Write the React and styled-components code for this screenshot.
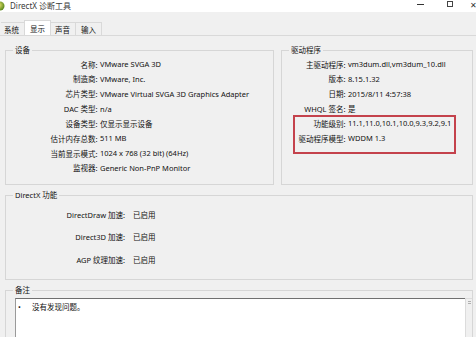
import React from 'react'
import styled, { createGlobalStyle } from 'styled-components';

const GlobalStyle = createGlobalStyle`
  * { box-sizing: border-box; }
  html, body {
    margin: 0;
    padding: 0;
    background: #f0f0f0;
  }
  body {
    font-family: "Noto Sans", "Noto Sans CJK SC", sans-serif;
    font-size: 7.5px;
    color: #111;
  }
`;

const deviceRows = [
  ['名称', 'VMware SVGA 3D'],
  ['制造商', 'VMware, Inc.'],
  ['芯片类型', 'VMware Virtual SVGA 3D Graphics Adapter'],
  ['DAC 类型', 'n/a'],
  ['设备类型', '仅显示显示设备'],
  ['估计内存总数', '511 MB'],
  ['当前显示模式', '1024 x 768 (32 bit) (64Hz)'],
  ['监视器', 'Generic Non-PnP Monitor'],
];

const driverRows = [
  ['主驱动程序', 'vm3dum.dll,vm3dum_10.dll'],
  ['版本', '8.15.1.32'],
  ['日期', '2015/8/11 4:57:38'],
  ['WHQL 签名', '是'],
];

const driverMarked = [
  ['功能级别', '11.1,11.0,10.1,10.0,9.3,9.2,9.1'],
  ['驱动程序模型', 'WDDM 1.3'],
];

const featureRows = [
  ['DirectDraw 加速', '已启用'],
  ['Direct3D 加速', '已启用'],
  ['AGP 纹理加速', '已启用'],
];

const tabs = ['系统', '显示', '声音', '输入'];

const App = () => {
  return (
    <Window>
      <GlobalStyle />
      <TitleBar>
        <svg width="10" height="10" viewBox="0 0 10 10" style={{ marginLeft: -5 }}>
          <defs>
            <radialGradient id="dx" cx="0.4" cy="0.4" r="0.6">
              <stop offset="0" stopColor="#e8e46a" />
              <stop offset="1" stopColor="#5e8a1e" />
            </radialGradient>
          </defs>
          <circle cx="5" cy="5" r="4.5" fill="url(#dx)" />
        </svg>
        <Title>DirectX 诊断工具</Title>
        <Controls>
          <Minimize />
          <Maximize />
          <Close>✕</Close>
        </Controls>
      </TitleBar>

      <TabStrip>
        {tabs.map((t) => (
          <Tab key={t} active={t === '显示'}>{t}</Tab>
        ))}
      </TabStrip>

      <Panel>
        <TopRow>
          <Group>
            <Legend>设备</Legend>
            <Rows labelWidth={91.5} valueGap={2.5}>
              {deviceRows.map(([k, v]) => (
                <React.Fragment key={k}>
                  <Label>{k}:</Label>
                  <Value>{v}</Value>
                </React.Fragment>
              ))}
            </Rows>
          </Group>

          <Group>
            <Legend>驱动程序</Legend>
            <Rows labelWidth={63.5} valueGap={2.5}>
              {driverRows.map(([k, v]) => (
                <React.Fragment key={k}>
                  <Label>{k}:</Label>
                  <Value>{v}</Value>
                </React.Fragment>
              ))}
              <Marked>
                {driverMarked.map(([k, v]) => (
                  <React.Fragment key={k}>
                    <Label>{k}:</Label>
                    <Value>{v}</Value>
                  </React.Fragment>
                ))}
              </Marked>
            </Rows>
          </Group>
        </TopRow>

        <Group>
          <Legend>DirectX 功能</Legend>
          <Rows labelWidth={119} valueGap={8} rowHeight={22.5} top={1.75}>
            {featureRows.map(([k, v]) => (
              <React.Fragment key={k}>
                <Label>{k}:</Label>
                <Value>{v}</Value>
              </React.Fragment>
            ))}
          </Rows>
        </Group>

        <Group>
          <Legend>备注</Legend>
          <NotesBox>
            <NotesText>
              <Bullet>•</Bullet>
              <span>没有发现问题。</span>
            </NotesText>
            <ScrollTrack>
              <ScrollArrow />
            </ScrollTrack>
          </NotesBox>
        </Group>
      </Panel>
    </Window>
  )
}

const Window = styled.div`
  width: 476px;
  height: 337px;
  overflow: hidden;
  display: flex;
  flex-direction: column;
  background: #f0f0f0;
`;

const TitleBar = styled.div`
  height: 12px;
  flex: none;
  background: #fff;
  display: flex;
  align-items: center;
`;

const Title = styled.span`
  margin-left: 5px;
  margin-top: -2px;
  font-size: 8px;
  color: #3a3a3a;
`;

const Controls = styled.div`
  margin-left: auto;
  display: flex;
  align-items: center;
  margin-top: -4px;
`;

const Minimize = styled.span`
  width: 7px;
  height: 1px;
  background: #333;
  margin-right: 23px;
`;

const Maximize = styled.span`
  width: 6px;
  height: 6px;
  border: 1px solid #444;
  margin-right: 17px;
`;

const Close = styled.span`
  font-size: 8px;
  color: #333;
  width: 6px;
  overflow: visible;
`;

const TabStrip = styled.div`
  display: flex;
  margin-top: 10px;
  height: 13px;
  flex: none;
  padding-left: 1px;
`;

const Tab = styled.div`
  height: ${(p) => (p.active ? '15px' : '13px')};
  margin-top: ${(p) => (p.active ? '-2px' : '0')};
  padding: 0 5px;
  margin-right: ${(p) => (p.active ? '-1px' : '0')};
  margin-left: ${(p) => (p.active ? '-1px' : '0')};
  border: 1px solid #d9d9d9;
  border-bottom: none;
  border-left: ${(p) => (p.active ? '1px solid #d9d9d9' : 'none')};
  background: ${(p) => (p.active ? '#fff' : '#f0f0f0')};
  display: flex;
  align-items: center;
  position: relative;
  z-index: ${(p) => (p.active ? 1 : 0)};
  &:first-child {
    border-left: none;
    padding-left: 3px;
  }
`;

const Panel = styled.div`
  flex: 1;
  border-top: 1px solid #d9d9d9;
  padding: 8px 3px 0 5px;
  display: grid;
  grid-template-rows: 141px 91px 1fr;
  row-gap: 4px;
`;

const TopRow = styled.div`
  display: grid;
  grid-template-columns: 269px 1fr;
  column-gap: 7px;
`;

const Group = styled.fieldset`
  margin: 0;
  padding: 0;
  min-width: 0;
  border: 1px solid #d6d6d6;
  position: relative;
`;

const Legend = styled.legend`
  margin-left: 7px;
  padding: 0 2px;
  line-height: 12px;
`;

const Rows = styled.div`
  display: grid;
  grid-template-columns: ${(p) => p.labelWidth}px 1fr;
  grid-auto-rows: ${(p) => p.rowHeight || 14.85}px;
  align-items: center;
  padding-top: ${(p) => (p.top != null ? p.top : 0.6)}px;
  & > div > span:nth-child(even),
  & > span:nth-child(even) {
    padding-left: ${(p) => p.valueGap}px;
  }
`;

const Label = styled.span`
  text-align: right;
  white-space: nowrap;
`;

const Value = styled.span`
  white-space: nowrap;
`;

const Marked = styled.div`
  grid-column: 1 / -1;
  display: grid;
  grid-template-columns: subgrid;
  grid-auto-rows: 14.85px;
  align-items: center;
  grid-row: span 2;
  position: relative;
  &::after {
    content: '';
    position: absolute;
    left: 11px;
    top: -1px;
    width: 159px;
    height: 35px;
    border: 2px solid #c4424c;
  }
`;

const NotesBox = styled.div`
  margin: 2px 0 0 9px;
  height: 60px;
  display: flex;
`;

const NotesText = styled.div`
  flex: 1;
  background: #fff;
  border-top: 1px solid #707070;
  border-left: 1px solid #9a9a9a;
  padding: 2px 0 0 2px;
  line-height: 12px;
  display: flex;
`;

const Bullet = styled.span`
  width: 14px;
`;

const ScrollTrack = styled.div`
  width: 7px;
  background: #f0f0f0;
  border-top: 1px solid #dcdcdc;
  border-left: 1px solid #dcdcdc;
  padding-top: 2px;
  display: flex;
  justify-content: center;
`;

const ScrollArrow = styled.span`
  width: 3px;
  height: 3px;
  border-top: 1px solid #b0b0b0;
  border-bottom: 1px solid #b0b0b0;
`;

export default App
